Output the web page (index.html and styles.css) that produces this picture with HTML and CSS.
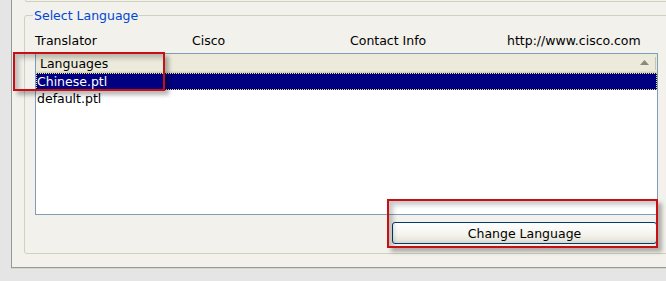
FILE: index.html
```html
<!DOCTYPE html>
<html>
<head>
<meta charset="utf-8">
<link rel="stylesheet" href="styles.css">
</head>
<body>
<div class="panel">
  <div class="prev-group"></div>
  <fieldset class="group">
    <legend class="group-title">Select Language</legend>
    <div class="info">
      <span>Translator</span>
      <span>Cisco</span>
      <span>Contact Info</span>
      <span>http://www.cisco.com</span>
    </div>
    <div class="listbox">
      <div class="lb-header">
        <span class="lb-title">Languages</span>
        <svg class="sort" width="9" height="5" viewBox="0 0 9 5"><polygon points="4.5,0 9,5 0,5" fill="#8b8878"/></svg>
        <span class="sep"></span>
      </div>
      <div class="row selected">Chinese.ptl</div>
      <div class="row">default.ptl</div>
    </div>
    <div class="actions">
      <button class="btn">Change Language</button>
    </div>
  </fieldset>
</div>
<div class="callout callout-list"></div>
<div class="callout callout-btn"></div>
</body>
</html>
```
FILE: styles.css
```css
html, body {
  margin: 0;
  padding: 0;
  overflow: hidden;
  width: 666px;
  height: 281px;
}
body {
  background: #e5e5e5;
  font-family: "DejaVu Sans", Verdana, sans-serif;
  font-size: 12.5px;
  color: #000;
  position: relative;
}
.panel {
  margin-left: 11px;
  margin-right: -30px;
  background: #f2f1eb;
  border-left: 1px solid #919b9c;
  border-bottom: 1px solid #919b9c;
  box-shadow: 0 1px 0 #d9d6c6;
  display: flow-root;
}
.prev-group {
  height: 1px;
  margin-left: 13px;
  border-left: 1px solid #d0d0bf;
  border-bottom: 1px solid #d0d0bf;
  border-bottom-left-radius: 2px;
}
.group {
  margin: 6px 26px 13px 12px;
  border: 1px solid #d0d0bf;
  border-radius: 3px;
  padding: 10px 11px 9px 10px;
  min-inline-size: 0;
}
.group-title {
  padding: 0 1px;
  margin-left: -2px;
  line-height: 15px;
  color: #0046d5;
}
.info {
  display: grid;
  grid-template-columns: 157px 158px 157px 1fr;
  line-height: 15px;
  height: 15px;
  margin-bottom: 5px;
  white-space: nowrap;
}
.listbox {
  box-sizing: border-box;
  height: 162px;
  border: 1px solid #7f9db9;
  background: #fff;
}
.lb-header {
  display: flex;
  align-items: center;
  height: 19px;
  background: #ebeadb;
  box-shadow: inset 0 -1px 0 #d6d2c2, inset 0 -2px 0 #e2decd;
  padding-right: 1px;
}
.lb-title {
  flex: 1;
  padding-left: 4px;
  line-height: 19px;
}
.sort {
  margin-right: 6px;
  margin-top: -2px;
}
.sep {
  width: 1px;
  height: 13px;
  margin-top: -1px;
  background: #c7c5b2;
}
.row {
  height: 17px;
  line-height: 17px;
  padding-left: 1px;
}
.selected {
  background: #000080;
  color: #fff;
  outline: 1px dotted #f2e86a;
  outline-offset: -1px;
}
.actions {
  display: flex;
  justify-content: flex-end;
  margin-top: 7px;
  padding-right: 1px;
}
.btn {
  width: 265px;
  height: 22px;
  padding: 0;
  border: 1px solid #003c74;
  border-radius: 3px;
  background: linear-gradient(#ffffff, #f5f4ee 55%, #e9e8df 85%, #d8d5c8);
  font-family: "DejaVu Sans", Verdana, sans-serif;
  font-size: 12.5px;
  color: #000;
}
.callout {
  position: absolute;
  box-sizing: border-box;
  border: 2px solid #c80f14;
  box-shadow: 4px 4px 4px rgba(0,0,0,0.28), inset 4px 4px 5px rgba(0,0,0,0.22);
}
.callout-list {
  left: 13px;
  top: 52px;
  width: 152px;
  height: 39px;
}
.callout-btn {
  left: 387px;
  top: 199px;
  width: 271px;
  height: 49px;
}
```
